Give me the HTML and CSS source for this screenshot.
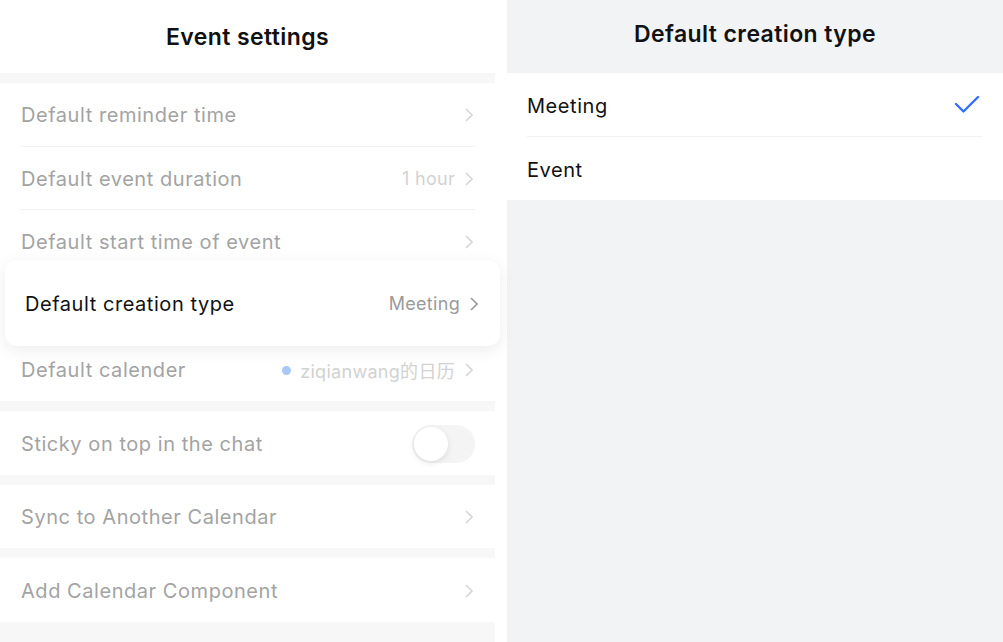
FILE: index.html
```html
<!DOCTYPE html>
<html lang="en">
<head>
  <meta charset="UTF-8" />
  <title>Event settings</title>
  <link rel="stylesheet" href="styles.css">
</head>
<body>
  <div class="screen">
    <section class="settings">
      <header class="settings-head">Event settings</header>

      <div class="group">
        <div class="row">
          <span class="row-label">Default reminder time</span>
          <span class="row-value"><svg class="chevron" viewBox="0 0 8 14"><path d="M1 1l6 6-6 6"/></svg></span>
        </div>
        <div class="row">
          <span class="row-label">Default event duration</span>
          <span class="row-value">1 hour <svg class="chevron" viewBox="0 0 8 14"><path d="M1 1l6 6-6 6"/></svg></span>
        </div>
        <div class="row">
          <span class="row-label">Default start time of event</span>
          <span class="row-value"><svg class="chevron" viewBox="0 0 8 14"><path d="M1 1l6 6-6 6"/></svg></span>
        </div>
        <!-- highlighted row, lifted out as a card -->
        <div class="row row-focus">
          <span class="row-label">Default creation type</span>
          <span class="row-value">Meeting <svg class="chevron" viewBox="0 0 8 14"><path d="M1 1l6 6-6 6"/></svg></span>
        </div>
        <div class="row">
          <span class="row-label">Default calender</span>
          <span class="row-value"><i class="cal-dot"></i>ziqianwang的日历 <svg class="chevron" viewBox="0 0 8 14"><path d="M1 1l6 6-6 6"/></svg></span>
        </div>
      </div>

      <div class="group">
        <div class="row">
          <span class="row-label">Sticky on top in the chat</span>
          <span class="toggle"><i class="toggle-knob"></i></span>
        </div>
      </div>

      <div class="group">
        <div class="row">
          <span class="row-label">Sync to Another Calendar</span>
          <span class="row-value"><svg class="chevron" viewBox="0 0 8 14"><path d="M1 1l6 6-6 6"/></svg></span>
        </div>
      </div>

      <div class="group">
        <div class="row">
          <span class="row-label">Add Calendar Component</span>
          <span class="row-value"><svg class="chevron" viewBox="0 0 8 14"><path d="M1 1l6 6-6 6"/></svg></span>
        </div>
      </div>
    </section>

    <section class="picker">
      <header class="picker-head">Default creation type</header>
      <div class="picker-list">
        <div class="option">
          <span>Meeting</span>
          <svg class="check" viewBox="0 0 26 18"><path d="M2 9l7.5 7.5L24 2"/></svg>
        </div>
        <div class="option">
          <span>Event</span>
        </div>
      </div>
    </section>
  </div>
</body>
</html>
```

FILE: styles.css
```css
body {
  margin: 0;
  background: #ffffff;
  font-family: Inter, "Noto Sans CJK SC", sans-serif;
}

.screen {
  display: flex;
  gap: 12px;
  width: 1003px;
  height: 642px;
  overflow: hidden;
}

/* left: settings list */
.settings {
  width: 495px;
  flex-shrink: 0;
  background: #f7f7f7;
}

.settings-head {
  height: 73px;
  background: #ffffff;
  display: flex;
  align-items: center;
  justify-content: center;
  font-size: 23px;
  font-weight: 600;
  letter-spacing: 0.4px;
  color: #111;
  padding-top: 1px;
  box-sizing: border-box;
  margin-bottom: 10px;
}

.group {
  background: #ffffff;
  padding: 0 20px 0 21px;
  margin-bottom: 10px;
}

.row {
  height: 63.5px;
  display: flex;
  align-items: center;
  justify-content: space-between;
  padding-top: 2px;
  border-bottom: 1px solid #f2f2f2;
  box-sizing: border-box;
}

.row:last-child {
  border-bottom: none;
}

.row-label {
  font-size: 20px;
  letter-spacing: 0.55px;
  color: #a3a3a3;
}

.row-value {
  display: flex;
  align-items: center;
  font-size: 18px;
  letter-spacing: 0.3px;
  color: #d2d2d2;
}

.chevron {
  width: 8px;
  height: 14px;
  margin-left: 10px;
  margin-right: 2px;
  fill: none;
  stroke: #d6d6d6;
  stroke-width: 1.6;
}

.cal-dot {
  width: 9px;
  height: 9px;
  border-radius: 50%;
  background: #a8c8fa;
  margin-right: 9px;
}

.row-focus {
  position: relative;
  height: 86px;
  margin: -14px -25px -8px -16px;
  padding: 2px 20px 0 20px;
  background: #ffffff;
  border-radius: 12px;
  border-bottom: none;
  box-shadow: 0 4px 16px rgba(0, 0, 0, 0.08);
}

.row-focus .row-label {
  color: #111;
}

.row-focus .row-value {
  color: #9a9a9a;
}

.row-focus .chevron {
  stroke: #9a9a9a;
}

.toggle {
  width: 63px;
  height: 38px;
  border-radius: 19px;
  background: #f4f4f4;
  display: flex;
  align-items: center;
  padding: 0 2px;
  box-sizing: border-box;
}

.toggle-knob {
  width: 34px;
  height: 34px;
  border-radius: 50%;
  background: #ffffff;
  box-shadow: 0 2px 6px rgba(0, 0, 0, 0.1);
}

/* right: option picker */
.picker {
  flex: 1;
  background: #f2f3f5;
}

.picker-head {
  height: 73px;
  display: flex;
  align-items: center;
  justify-content: center;
  padding-bottom: 5px;
  box-sizing: border-box;
  font-size: 23px;
  font-weight: 600;
  letter-spacing: 0.4px;
  color: #111;
}

.picker-list {
  background: #ffffff;
  padding: 0 21px 0 20px;
}

.option {
  height: 63.5px;
  display: flex;
  align-items: center;
  justify-content: space-between;
  padding-top: 3px;
  font-size: 20px;
  letter-spacing: 0.55px;
  color: #111;
  border-bottom: 1px solid #f2f2f2;
  box-sizing: border-box;
}

.option:last-child {
  border-bottom: none;
}

.check {
  width: 26px;
  height: 18px;
  margin-right: 2px;
  margin-top: -3px;
  fill: none;
  stroke: #3370ff;
  stroke-width: 2.4;
  stroke-linecap: round;
  stroke-linejoin: round;
}
```
